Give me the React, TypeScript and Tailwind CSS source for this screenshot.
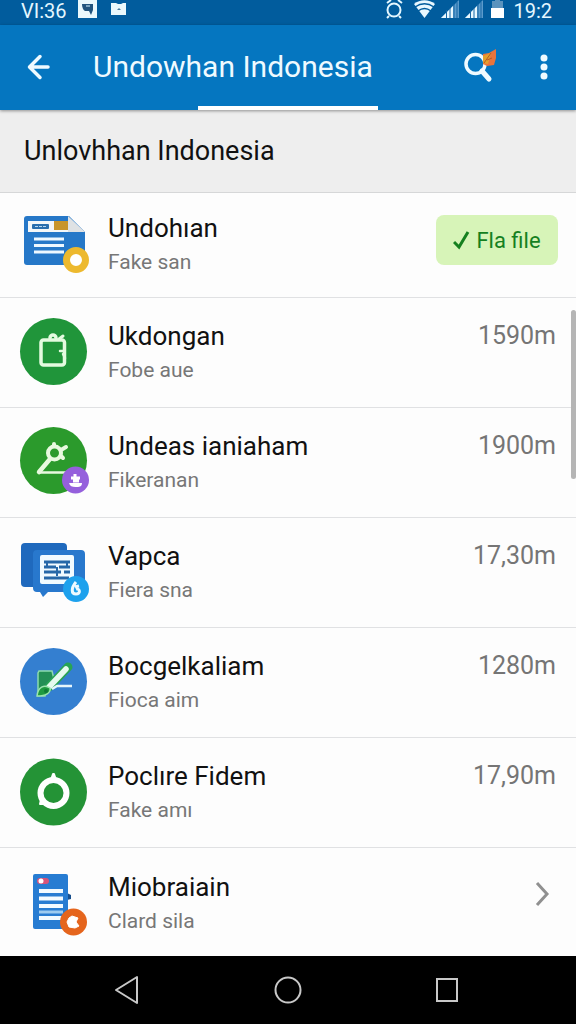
import type { ReactNode } from 'react'

function CardIcon() {
  return (
    <>
      <path d="M9 7h42l16 16v30a3 3 0 0 1-3 3H9a3 3 0 0 1-3-3V10a3 3 0 0 1 3-3z" fill="#2678c8" />
      <path d="M10 12h42l8 11H10z" fill="#f4f7f8" />
      <path d="M50 7l17 16H50z" fill="#dfe2e4" />
      <rect x="36" y="12" width="14" height="9" fill="#c8952a" />
      <rect x="14" y="15" width="17" height="5" rx="1" fill="#2a6fae" />
      <path d="M17 17.5h11" stroke="#b9d8ef" strokeDasharray="3 1" />
      <path d="M16 30h30M16 36.5h30M16 43h30" stroke="#eef8ff" strokeWidth="3" />
      <circle cx="58" cy="51" r="9.5" fill="#fff" stroke="#edb92e" strokeWidth="7" />
    </>
  )
}

function WalletIcon() {
  return (
    <>
      <circle cx="35.5" cy="34.5" r="33.5" fill="#20953a" />
      <g fill="none" stroke="#e4fbe0" strokeWidth="3.5" strokeLinecap="round">
        <rect x="23" y="23" width="23.5" height="25" rx="2.5" />
        <path d="M32 21c0-4 6-4 6 0" />
        <path d="M41 22l4-3" strokeWidth="3" />
        <path d="M42 34h4M45 37l2 4" strokeWidth="2.5" />
      </g>
    </>
  )
}

function CompassIcon() {
  return (
    <>
      <circle cx="35.5" cy="33.5" r="33.5" fill="#2b9a2c" />
      <g fill="none" stroke="#e8f9df" strokeLinecap="round" strokeLinejoin="round">
        <circle cx="36.5" cy="26" r="6.5" strokeWidth="4" />
        <path d="M36 18v-1M43 23l5-3M43 29l2 2" strokeWidth="4" />
        <path d="M32 32L21 45" strokeWidth="4.5" />
        <path d="M22 45.5h27" strokeWidth="2.5" />
      </g>
      <circle cx="57.5" cy="53" r="13.5" fill="#9560dc" />
      <path d="M57 47v3M53 51h9M55 54h6" stroke="#fff" strokeWidth="3" />
      <path d="M51 56h13c0 4-3 4-6.5 4S52 59 51 56z" fill="#fff" />
    </>
  )
}

function ChatIcon() {
  return (
    <>
      <rect x="3" y="6" width="46" height="44" rx="4" fill="#1f69bd" />
      <path d="M19 13h44a4 4 0 0 1 4 4v34a4 4 0 0 1-4 4H30l-5 5-3-5h-3a4 4 0 0 1-4-4V17a4 4 0 0 1 4-4z" fill="#2878cd" />
      <rect x="22" y="18" width="34" height="29" rx="2" fill="#f2fbff" />
      <path d="M26 25h26M26 30h12M41 30h11M26 35h17M46 35h6M26 41h25" stroke="#2768a8" strokeWidth="3" />
      <path d="M29 26v5M39 30v9M49 26v4" stroke="#2768a8" strokeWidth="2" />
      <circle cx="58" cy="52" r="13" fill="#1da1ed" />
      <path d="M58 45c-5 6-5 12 0 12s4-6 0-5M57 50l4-1" fill="none" stroke="#effaff" strokeWidth="3" />
    </>
  )
}

function PenIcon() {
  return (
    <>
      <circle cx="35.5" cy="34.5" r="33.5" fill="#347fd0" />
      <path d="M21 24h13l2 8-8 9-1 8h-7V26z" fill="#238f55" stroke="#8cdcae" strokeWidth="1.5" />
      <path d="M31 40L50 20" stroke="#28a454" strokeWidth="9" strokeLinecap="round" />
      <path d="M31 40L48 22" stroke="#e6fbef" strokeWidth="5.5" strokeLinecap="round" />
      <path d="M19 49c1-9 7-12 13-8 1 5-4 8-13 8z" fill="#1e9a3e" stroke="#9ce4ae" strokeWidth="1.5" />
      <circle cx="28" cy="44" r="2" fill="#0f7a34" />
      <path d="M34 42l5-3h15" fill="none" stroke="#e6f6fb" strokeWidth="2.5" />
    </>
  )
}

function RingIcon() {
  return (
    <>
      <circle cx="35.5" cy="35" r="33.5" fill="#249336" />
      <path d="M33 23l2-6h1l2 6M23 43l-1 4 5 0" fill="#fff" stroke="#fff" strokeWidth="2" strokeLinejoin="round" />
      <circle cx="35.5" cy="36" r="13" fill="none" stroke="#fff" strokeWidth="6" />
    </>
  )
}

function DocumentIcon() {
  return (
    <>
      <path d="M49 25l4 2v4l-4 1z" fill="#174f8d" />
      <rect x="15" y="6" width="35" height="55" rx="2" fill="#277cd2" />
      <rect x="19" y="10" width="12" height="6" rx="3" fill="#d6547b" />
      <circle cx="23" cy="13" r="2.5" fill="#fff" />
      <path d="M21 23h24M21 30.5h24M21 38h24M21 50h24" stroke="#f2faff" strokeWidth="4" />
      <path d="M21 44h24" stroke="#9ccbf0" strokeWidth="3" />
      <circle cx="55.5" cy="54" r="13.5" fill="#e5651d" />
      <path d="M54 48l6 2-2 4 3 4-4 2-6-1-2-5 2-4z" fill="#fff" stroke="#fff" strokeLinejoin="round" />
    </>
  )
}

type Item = { title: string; note: string; value?: string; icon: ReactNode }

const items: Item[] = [
  { title: 'Undohıan', note: 'Fake san', icon: <CardIcon /> },
  { title: 'Ukdongan', note: 'Fobe aue', value: '1590m', icon: <WalletIcon /> },
  { title: 'Undeas ianiaham', note: 'Fikeranan', value: '1900m', icon: <CompassIcon /> },
  { title: 'Vapca', note: 'Fiera sna', value: '17,30m', icon: <ChatIcon /> },
  { title: 'Bocgelkaliam', note: 'Fioca aim', value: '1280m', icon: <PenIcon /> },
  { title: 'Poclıre Fidem', note: 'Fake amı', value: '17,90m', icon: <RingIcon /> },
  { title: 'Miobraiain', note: 'Clard sila', icon: <DocumentIcon /> },
]

function StatusBar() {
  return (
    <div className="flex h-[25px] items-start justify-between bg-[#015c9d] pr-6 pl-[21px] text-[#e4f7ff]">
      <div className="flex items-start">
        <span className="w-[57px] text-xl leading-[22px]">VI:36</span>
        <svg width="52" height="20" viewBox="0 0 52 20" aria-hidden="true">
          <path d="M0 0h19v18H0z" fill="#eaf8fc" />
          <path d="M4 4h11v6l-2 5-2-4H7c-2-1-3-4-3-7z" fill="#21537d" />
          <path d="M8 5h4v2H8z" fill="#7aa3bf" />
          <path d="M33 3h5l2 1h3l2-1h3v12H33z" fill="#eaf8fc" />
          <path d="M39 10l2-2 2 2z" fill="#4a7a9c" />
        </svg>
      </div>
      <div className="flex items-start">
        <svg width="120" height="20" viewBox="0 0 120 20" aria-hidden="true">
          <g fill="none" stroke="#e4f7ff" strokeWidth="2">
            <circle cx="9" cy="10" r="6.5" />
            <path d="M2 3l4-3M13 0l4 3M4 16l-2 2M14 16l2 2" />
          </g>
          <path d="M29 4c6-5 15-5 21 0L39.5 18z" fill="#e9f8ff" />
          <path d="M30 7c6-4 13-4 19 0M33 11c4-3 9-3 13 0" fill="none" stroke="#015c9d" strokeWidth="1.5" />
          <g>
            <path d="M56 18L74 0v18z" fill="#5b9bcc" />
            <path d="M56 18L68 6v12z" fill="#e9f8ff" />
            <path d="M61.5 10v8M65 8v10M69 4v14M72 2v16" stroke="#1766a5" />
          </g>
          <g>
            <path d="M80 18L98 0v18z" fill="#5b9bcc" />
            <path d="M80 18L92 6v12z" fill="#e9f8ff" />
            <path d="M85.5 10v8M89 8v10M93 4v14M96 2v16" stroke="#1766a5" />
          </g>
          <path d="M107 1h3V0h5v1h3v8h-11z" fill="#5b93bd" />
          <path d="M106 8h13v10h-13z" fill="#fff" />
        </svg>
        <span className="ml-2 text-xl leading-[22px]">19:2</span>
      </div>
    </div>
  )
}

function AppBar() {
  return (
    <header className="relative z-10 flex h-[85px] items-center bg-[#0576c0] pr-6 pb-[2px] pl-[26px] text-[#effaff] shadow-[0_1px_3px_rgba(0,0,0,0.4)]">
      <button type="button" aria-label="Back" className="mr-[41px]">
        <svg width="26" height="26" viewBox="0 0 26 26" fill="none" stroke="currentColor" strokeWidth="3.5" strokeLinecap="round" strokeLinejoin="round">
          <path d="M22 13H4M14 2.500L3.500 13 14 23.500" />
        </svg>
      </button>
      <h1 className="flex-1 text-[30px] leading-9">Undowhan Indonesia</h1>
      <button type="button" aria-label="Search" className="mr-[43px]">
        <svg width="34" height="36" viewBox="0 0 34 36" fill="none">
          <circle cx="12.5" cy="15" r="9.5" stroke="#effaff" strokeWidth="3.5" />
          <path d="M19 22l7 8" stroke="#effaff" strokeWidth="5" strokeLinecap="round" />
          <path d="M20 5l6-1 7-4v9l-2 7-7 1-4-2z" fill="#e8743c" />
          <path d="M20 7l8-3-3 11-5-1z" fill="#e3a02c" />
          <path d="M21 14l7-10M24 11l5-2" stroke="#b55a24" />
        </svg>
      </button>
      <button type="button" aria-label="More options" className="mr-1">
        <svg width="8" height="26" viewBox="0 0 8 26" fill="currentColor">
          <circle cx="4" cy="4" r="3.5" />
          <circle cx="4" cy="13" r="3.5" />
          <circle cx="4" cy="22" r="3.5" />
        </svg>
      </button>
      <span className="absolute bottom-0 left-[198px] h-1 w-[180px] bg-white" />
    </header>
  )
}

function Row({ item, first, last }: { item: Item; first: boolean; last: boolean }) {
  return (
    <li
      className={`flex items-center border-[#e0e1e3] pl-[18px] ${first ? 'h-[105px] border-b pr-[18px]' : last ? 'h-[107px] pt-1 pr-[26px]' : 'h-[110px] border-b pr-5'}`}
    >
      <svg width="72" height="72" viewBox="0 0 72 72" className="mr-[18px] shrink-0" aria-hidden="true">
        {item.icon}
      </svg>
      <div className="min-w-0 flex-1">
        <h3 className="text-[26px] leading-[34px] text-[#111]">{item.title}</h3>
        <p className="text-[21px] leading-[34px] text-[#777]">{item.note}</p>
      </div>
      {first && (
        <button type="button" className="mb-2.5 flex h-[50px] w-[122px] items-center justify-center gap-1.5 rounded-lg bg-[#d7f4b8] text-[22px] text-[#15801f]">
          <svg width="17" height="20" viewBox="0 0 17 20" fill="none" stroke="currentColor" strokeWidth="3" aria-hidden="true">
            <path d="M1 12l5 5L15 2" />
          </svg>
          Fla file
        </button>
      )}
      {item.value && <span className="mb-[34px] text-[25px] leading-[34px] text-[#757575]">{item.value}</span>}
      {last && (
        <svg width="16" height="26" viewBox="0 0 16 26" className="mb-5" fill="none" stroke="#909090" strokeWidth="3" aria-hidden="true">
          <path d="M3 2l10 11L3 24" />
        </svg>
      )}
    </li>
  )
}

function NavBar() {
  return (
    <nav className="flex h-[68px] items-center justify-around bg-black px-[47px] text-[#c8c8c8]">
      <button type="button" aria-label="Back">
        <svg width="28" height="30" viewBox="0 0 28 30" fill="none" stroke="currentColor" strokeWidth="2" strokeLinejoin="round">
          <path d="M24 2v26L3 15z" />
        </svg>
      </button>
      <button type="button" aria-label="Home">
        <svg width="28" height="30" viewBox="0 0 28 30" fill="none" stroke="currentColor" strokeWidth="2">
          <circle cx="14" cy="15" r="12.5" />
        </svg>
      </button>
      <button type="button" aria-label="Recent apps">
        <svg width="28" height="30" viewBox="0 0 28 30" fill="none" stroke="currentColor" strokeWidth="2">
          <rect x="2" y="4" width="20" height="22" />
        </svg>
      </button>
    </nav>
  )
}

export default function App() {
  return (
    <div className="flex min-h-screen flex-col bg-[#fdfdfd] font-['Roboto',sans-serif]">
      <StatusBar />
      <AppBar />
      <main className="relative flex-1">
        <h2 className="flex h-[83px] items-center border-b border-[#d6d7d8] bg-[#eeeeee] pl-6 text-[27px] text-[#111]">
          Unlovhhan Indonesia
        </h2>
        <ul>
          {items.map((item, i) => (
            <Row key={item.title} item={item} first={i === 0} last={i === items.length - 1} />
          ))}
        </ul>
        {/* Scroll thumb */}
        <div className="absolute top-[200px] right-0 h-[169px] w-[5px] rounded-full bg-[#b5b5b5]" />
      </main>
      <NavBar />
    </div>
  )
}
